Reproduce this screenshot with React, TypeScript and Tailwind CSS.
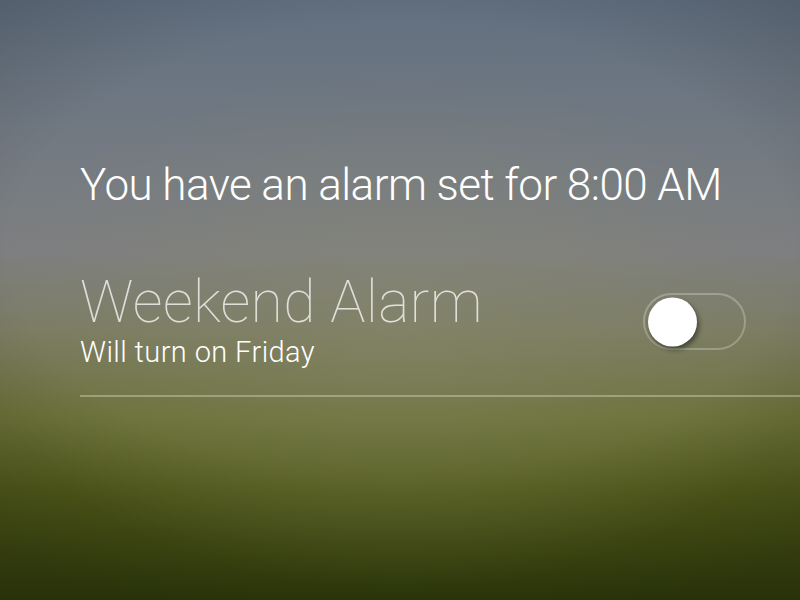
import React from 'react';

function Toggle({ on, onChange }: { on: boolean; onChange: () => void }) {
  return (
    <button
      onClick={onChange}
      className="relative h-[57px] w-[103px] shrink-0 rounded-full border-2 border-white/25"
    >
      <span
        className={`absolute top-1/2 h-[49px] w-[49px] -translate-y-1/2 rounded-full bg-white shadow-[2px_3px_5px_rgba(0,0,0,0.45)] transition-all ${
          on ? 'left-[47px]' : 'left-[3px]'
        }`}
      />
    </button>
  );
}

export default function App() {
  const [weekendOn, setWeekendOn] = React.useState(false);

  return (
    <div className="h-[600px] w-[800px] overflow-hidden bg-[radial-gradient(ellipse_420px_260px_at_400px_330px,rgba(140,140,110,0.4),rgba(140,140,110,0)),radial-gradient(ellipse_650px_380px_at_400px_250px,rgba(0,0,0,0)_60%,rgba(0,0,0,0.2)),linear-gradient(to_bottom,#627080_0%,#737a82_25%,#7e7f80_42%,#7b7c63_55%,#6b7137_70%,#515a1a_82%,#323e0b_100%)] font-['Roboto','Liberation_Sans',sans-serif] text-white">
      <div className="flex flex-col pl-20 pt-[163px]">
        <p className="text-[44px] font-light leading-[44px] tracking-[-0.55px]">
          You have an alarm set for 8:00 AM
        </p>

        <div className="mt-[65px] flex items-start">
          <div className="flex flex-1 flex-col">
            <h2 className="text-[59px] font-thin leading-[59px] tracking-[0.3px] text-white/75">
              Weekend Alarm
            </h2>
            <span className="mt-[7px] text-[29px] font-light leading-[29px] tracking-[0.4px]">
              Will turn on Friday
            </span>
          </div>
          <div className="mr-[54px] mt-[21px]">
            <Toggle on={weekendOn} onChange={() => setWeekendOn(!weekendOn)} />
          </div>
        </div>

        <div className="mt-[28px] h-[2px] bg-white/30" />
      </div>
    </div>
  );
}
